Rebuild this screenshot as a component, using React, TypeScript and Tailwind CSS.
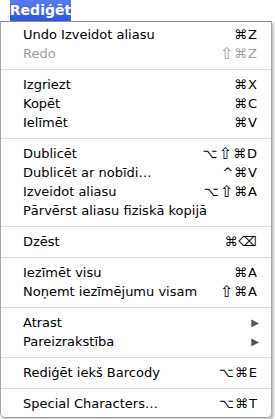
type Item = { label: string; keys?: string; disabled?: boolean; submenu?: boolean };

const GROUPS: Item[][] = [
  [
    { label: 'Undo Izveidot aliasu', keys: '⌘Z' },
    { label: 'Redo', keys: '⇧⌘Z', disabled: true },
  ],
  [
    { label: 'Izgriezt', keys: '⌘X' },
    { label: 'Kopēt', keys: '⌘C' },
    { label: 'Ielīmēt', keys: '⌘V' },
  ],
  [
    { label: 'Dublicēt', keys: '⌥⇧⌘D' },
    { label: 'Dublicēt ar nobīdi…', keys: '^⌘V' },
    { label: 'Izveidot aliasu', keys: '⌥⇧⌘A' },
    { label: 'Pārvērst aliasu fiziskā kopijā' },
  ],
  [{ label: 'Dzēst', keys: '⌘⌫' }],
  [
    { label: 'Iezīmēt visu', keys: '⌘A' },
    { label: 'Noņemt iezīmējumu visam', keys: '⇧⌘A' },
  ],
  [
    { label: 'Atrast', submenu: true },
    { label: 'Pareizrakstība', submenu: true },
  ],
  [{ label: 'Rediģēt iekš Barcody', keys: '⌥⌘E' }],
  [{ label: 'Special Characters…', keys: '⌥⌘T' }],
];

function Keys({ keys }: { keys: string }) {
  return (
    <span className="flex items-center gap-[1px] leading-none">
      {[...keys].map((k, i) =>
        k === '⇧' ? (
          <span key={i} className="text-[16px] leading-none">
            {k}
          </span>
        ) : (
          <span key={i}>{k}</span>
        ),
      )}
    </span>
  );
}

function Row({ item }: { item: Item }) {
  return (
    <div
      className={`flex h-[19px] items-center justify-between pl-[22px] pr-[14px] ${
        item.disabled ? 'text-[#a0a0a0]' : 'text-black'
      }`}
    >
      <span>{item.label}</span>
      {item.keys && <Keys keys={item.keys} />}
      {item.submenu && <span className="mr-[-2px] text-[10px] text-[#555]">▶</span>}
    </div>
  );
}

export default function App() {
  return (
    <div className="h-[419px] w-[275px] bg-white font-['DejaVu_Sans',sans-serif] text-[13px]">
      <div className="ml-[10px] flex h-[21px] w-[61px] items-center justify-center bg-gradient-to-b from-[#5a7cf2] to-[#2f55e4] text-[14px] font-bold text-white">
        Rediģēt
      </div>
      <div className="w-[272px] rounded-b-[5px] border border-t-[#8c8c8c] border-x-[#a8a8a8] border-b-[#a0a0a0] bg-white pb-[4px] pt-[3px] shadow-[2px_2px_3px_rgba(0,0,0,0.25)]">
        {GROUPS.map((group, i) => (
          <div key={i}>
            {i > 0 && <div className="mb-[5px] mt-[6px] h-px bg-[#dedede]" />}
            {group.map((item) => (
              <Row key={item.label} item={item} />
            ))}
          </div>
        ))}
      </div>
    </div>
  );
}
